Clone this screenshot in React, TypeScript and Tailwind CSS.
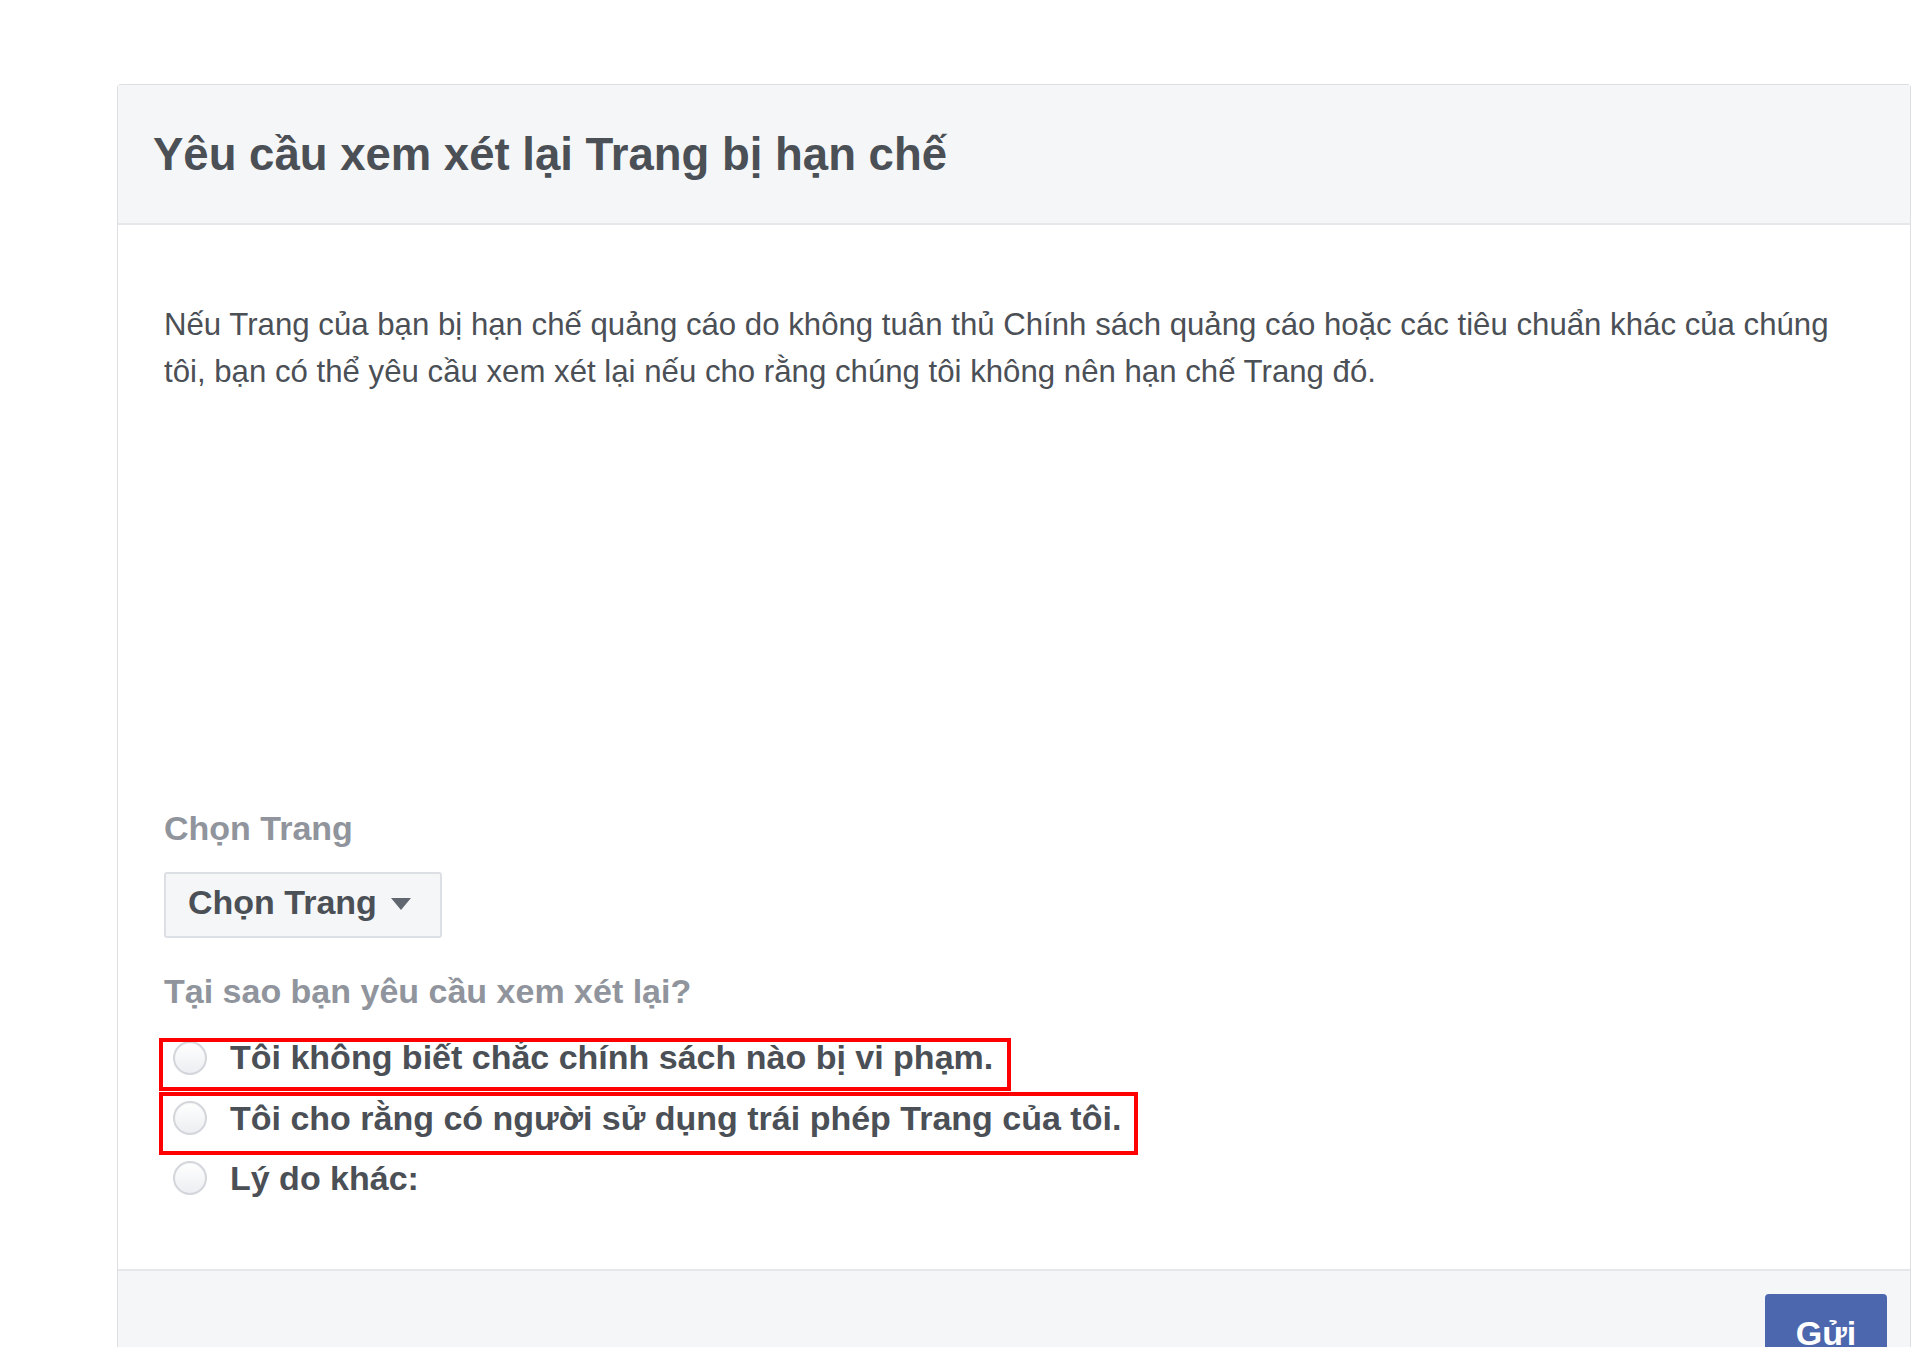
import React from "react";

const font = { fontFamily: '"Liberation Sans", Arial, sans-serif' };

function Radio() {
  return (
    <span className="ml-[9px] mr-[23px] inline-block h-[34px] w-[34px] shrink-0 rounded-full border-2 border-[#d3d6db] bg-gradient-to-b from-[#ffffff] to-[#eceef1] shadow-[inset_0_1px_1px_rgba(0,0,0,0.04)]" />
  );
}

export default function App() {
  return (
    <div className="min-h-[1347px] w-[1931px] overflow-hidden bg-white" style={font}>
      <div className="h-[84px]" />
      <div className="ml-[117px] w-[1794px] rounded-t-[4px] border border-b-0 border-[#dddfe2]">
        <div className="flex h-[140px] items-center border-b-2 border-[#e5e7ea] bg-[#f5f6f7] px-[35px] pt-[2px]">
          <h1 className="text-[45.5px] font-bold leading-none text-[#4b4f56]">
            Yêu cầu xem xét lại Trang bị hạn chế
          </h1>
        </div>
        <div className="px-[46px] pb-[61px] pt-[76px]">
          <p className="w-[1700px] text-[31.2px] leading-[47px] text-[#4b4f56]">
            Nếu Trang của bạn bị hạn chế quảng cáo do không tuân thủ Chính sách quảng cáo hoặc các tiêu chuẩn khác của chúng tôi, bạn có thể yêu cầu xem xét lại nếu cho rằng chúng tôi không nên hạn chế Trang đó.
          </p>
          <div className="mt-[413px] text-[34px] font-bold leading-[40px] text-[#90949c]">Chọn Trang</div>
          <div className="mt-[24px] flex h-[66px] w-[278px] items-center rounded-[3px] border-2 border-[#dcdfe3] bg-[#f5f6f7] pb-[6px] pl-[22px]">
            <span className="text-[34px] font-bold leading-none text-[#4b4f56]">Chọn Trang</span>
            <svg className="ml-[14px] mt-[4px]" width="20" height="12" viewBox="0 0 20 12">
              <path d="M0 0 L20 0 L10 12 Z" fill="#606770" />
            </svg>
          </div>
          <div className="mt-[33px] text-[34px] font-bold leading-[40px] text-[#90949c]">
            Tại sao bạn yêu cầu xem xét lại?
          </div>
          <div className="mt-[17px]">
            <div className="relative flex h-[60px] items-center">
              <Radio />
              <span className="-mt-[2px] text-[34px] font-bold leading-none text-[#4b4f56]">
                Tôi không biết chắc chính sách nào bị vi phạm.
              </span>
              <div className="pointer-events-none absolute left-[-5px] top-[10px] h-[53px] w-[852px] border-4 border-[#ff0000]" />
            </div>
            <div className="relative flex h-[60px] items-center">
              <Radio />
              <span className="text-[34px] font-bold leading-none text-[#4b4f56]">
                Tôi cho rằng có người sử dụng trái phép Trang của tôi.
              </span>
              <div className="pointer-events-none absolute left-[-5px] top-[4px] h-[63px] w-[979px] border-4 border-[#ff0000]" />
            </div>
            <div className="relative flex h-[60px] items-center">
              <Radio />
              <span className="text-[34px] font-bold leading-none text-[#4b4f56]">Lý do khác:</span>
            </div>
          </div>
        </div>
        <div className="flex h-[200px] justify-end border-t-2 border-[#e5e7ea] bg-[#f5f6f7] pr-[23px] pt-[23px]">
          <div className="flex h-[120px] w-[122px] justify-center rounded-[4px] bg-[#4c67ad] pt-[22px]">
            <span className="text-[34px] font-bold leading-none text-white">Gửi</span>
          </div>
        </div>
      </div>
    </div>
  );
}
